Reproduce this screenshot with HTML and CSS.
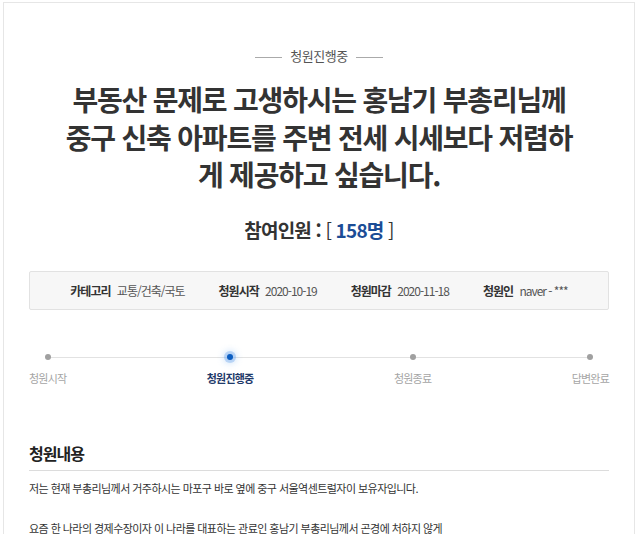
FILE: index.html
```html
<!DOCTYPE html>
<html lang="ko">
<head>
    <meta charset="UTF-8">
    <meta name="viewport" content="width=device-width, initial-scale=1.0">
    <title>청원진행중</title>
    <link rel="stylesheet" href="styles.css">
</head>
<body>
    <div class="petition">
        <div class="status-label"><span>청원진행중</span></div>

        <h1 class="petition-title">부동산 문제로 고생하시는 홍남기 부총리님께<br>중구 신축 아파트를 주변 전세 시세보다 저렴하<br>게 제공하고 싶습니다.</h1>

        <h2 class="counter">참여인원 : <span class="bracket">[</span> <span class="count">158명</span> <span class="bracket">]</span></h2>

        <ul class="petition-info">
            <li><strong>카테고리</strong> 교통/건축/국토</li>
            <li><strong>청원시작</strong> 2020-10-19</li>
            <li><strong>청원마감</strong> 2020-11-18</li>
            <li><strong>청원인</strong> naver - ***</li>
        </ul>

        <div class="progress">
            <div class="step">
                <span class="dot"></span>
                <span class="step-name">청원시작</span>
            </div>
            <div class="step active">
                <span class="dot"></span>
                <span class="step-name">청원진행중</span>
            </div>
            <div class="step">
                <span class="dot"></span>
                <span class="step-name">청원종료</span>
            </div>
            <div class="step">
                <span class="dot"></span>
                <span class="step-name">답변완료</span>
            </div>
        </div>

        <div class="petition-content">
            <h3>청원내용</h3>
            <p>저는 현재 부총리님께서 거주하시는 마포구 바로 옆에 중구 서울역센트럴자이 보유자입니다.</p>
            <p>요즘 한 나라의 경제수장이자 이 나라를 대표하는 관료인 홍남기 부총리님께서 곤경에 처하지 않게</p>
        </div>
    </div>
</body>
</html>
```

FILE: styles.css
```css
body {
    margin: 0;
    padding: 2px 5px 0 3px;
    background: #fff;
    font-family: "Noto Sans CJK KR", "Noto Sans", sans-serif;
    color: #333;
}
.petition {
    border: 1px solid #e6e6e6;
    border-bottom: none;
    padding: 43px 25px 0;
    height: 600px;
}
.status-label {
    text-align: center;
    font-size: 13px;
    line-height: 19px;
    color: #555;
    letter-spacing: -0.5px;
}
.status-label span::before,
.status-label span::after {
    content: "";
    display: inline-block;
    width: 27px;
    height: 1px;
    background: #aaa;
    vertical-align: middle;
    margin: 0 8px;
}
.petition-title {
    margin: 16px 0 0;
    text-align: center;
    font-size: 28px;
    font-weight: 700;
    line-height: 37.5px;
    letter-spacing: -1.2px;
    color: #333;
}
.counter {
    margin: 22px 0 0;
    text-align: center;
    font-size: 19px;
    line-height: 28px;
    font-weight: 700;
    letter-spacing: -0.8px;
    color: #333;
}
.counter .bracket {
    font-weight: 400;
}
.counter .count {
    color: #1c4d96;
}
.petition-info {
    list-style: none;
    margin: 27px 0 0;
    padding: 0;
    height: 37px;
    display: flex;
    justify-content: center;
    align-items: center;
    gap: 34px;
    background: #f7f7f7;
    border: 1px solid #e2e2e2;
    border-radius: 2px;
    font-size: 12px;
    letter-spacing: -1px;
    color: #555;
}
.petition-info strong {
    color: #333;
    margin-right: 4px;
}
.progress {
    position: relative;
    display: flex;
    justify-content: space-between;
    margin-top: 41px;
}
.progress::before {
    content: "";
    position: absolute;
    left: 18px;
    right: 19px;
    top: 6px;
    height: 1px;
    background: #e2e2e2;
}
.step {
    position: relative;
    display: flex;
    flex-direction: column;
    align-items: center;
    gap: 10px;
}
.dot {
    width: 6px;
    height: 6px;
    margin-top: 3px;
    border-radius: 50%;
    background: #a0a0a0;
}
.step-name {
    font-size: 11px;
    line-height: 16px;
    letter-spacing: -0.8px;
    color: #a5a5a5;
}
.step.active .dot {
    background: #0b5ec2;
    box-shadow: 0 0 0 3px rgba(100, 160, 235, 0.35), 0 0 6px 4px rgba(120, 175, 240, 0.3);
}
.step.active .step-name {
    color: #1f3a6a;
    font-weight: 700;
}
.petition-content {
    margin-top: 56px;
}
.petition-content h3 {
    margin: 0;
    padding-bottom: 5px;
    border-bottom: 1px solid #dcdcdc;
    font-size: 16px;
    line-height: 23px;
    font-weight: 700;
    letter-spacing: -1px;
    color: #222;
}
.petition-content p {
    margin: 9px 0 23px;
    font-size: 11px;
    line-height: 17px;
    letter-spacing: -0.55px;
    color: #333;
}
```
